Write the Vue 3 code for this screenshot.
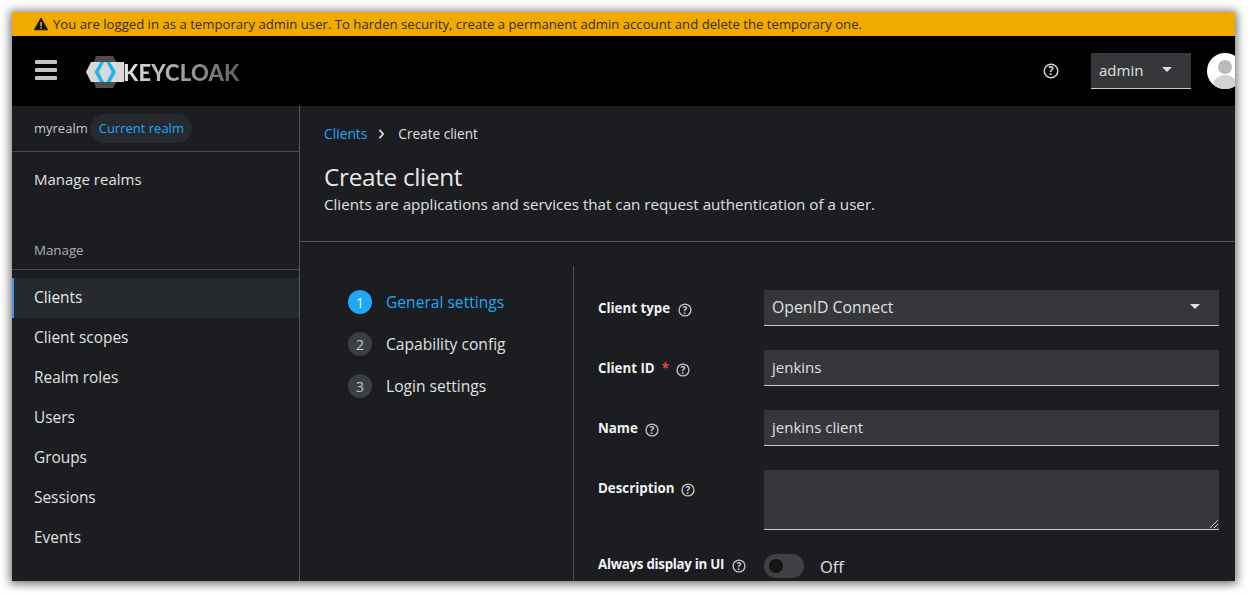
<script setup>
const navItems = ['Clients', 'Client scopes', 'Realm roles', 'Users', 'Groups', 'Sessions', 'Events']
const steps = [
  { n: 1, label: 'General settings', current: true },
  { n: 2, label: 'Capability config', current: false },
  { n: 3, label: 'Login settings', current: false }
]
</script>

<template>
  <div class="page">
    <div class="window">
      <div class="banner">
        <svg class="warn" viewBox="0 0 16 16" width="14" height="14"><path d="M8 1.2 15.6 14.6H.4Z" fill="#151515" stroke="#151515" stroke-linejoin="round"/><rect x="7.1" y="5.6" width="1.8" height="5" fill="#f0ab00"/><rect x="7.1" y="11.4" width="1.8" height="1.8" fill="#f0ab00"/></svg>
        <span>You are logged in as a temporary admin user. To harden security, create a permanent admin account and delete the temporary one.</span>
      </div>
      <header class="topbar">
        <button class="burger" aria-label="Menu"><i></i><i></i><i></i></button>
        <div class="logo">
          <svg width="38" height="32" viewBox="0 0 38 32">
            <path d="M10 0H27L31 7V25L27 32H10L4 16Z" fill="#4d4d4d"/>
            <path d="M0 16 5 6H38V26H5Z" fill="#d9d9d9"/>
            <path d="M14.5 6 8.5 16 14 26H18L12.8 16 18 6ZM24 6 30 16 24.5 26H20.5L25.7 16 20.5 6Z" fill="#1cb5ea"/>
          </svg>
          <span class="wordmark">KEYCLOAK</span>
        </div>
        <div class="top-right">
          <svg class="top-help" viewBox="0 0 16 16" width="16" height="16"><circle cx="8" cy="8" r="6.8" fill="none" stroke="#d2d2d2" stroke-width="1.5"/><text x="8" y="12" text-anchor="middle" class="q">?</text></svg>
          <div class="user"><span>admin</span><i class="caret"></i></div>
          <svg class="avatar" viewBox="0 0 36 36" width="36" height="36"><defs><clipPath id="av"><circle cx="18" cy="18" r="18"/></clipPath></defs><circle cx="18" cy="18" r="18" fill="#fff"/><g clip-path="url(#av)"><circle cx="18" cy="14" r="7" fill="#b8bbbe"/><ellipse cx="18" cy="32" rx="12" ry="10" fill="#d2d2d2"/></g></svg>
        </div>
      </header>
      <div class="body">
        <aside class="sidebar">
          <div class="realm"><span class="realm-name">myrealm</span><span class="chip">Current realm</span></div>
          <div class="link manage-realms">Manage realms</div>
          <div class="group-title">Manage</div>
          <nav class="nav">
            <div v-for="(item, i) in navItems" :key="item" class="link" :class="{ active: i === 0 }">{{ item }}</div>
          </nav>
        </aside>
        <main class="main">
          <section class="head">
            <div class="crumbs"><a>Clients</a><svg viewBox="0 0 8 12" width="7" height="10"><path d="M1.5 1 6 6 1.5 11" fill="none" stroke="#e0e0e0" stroke-width="2"/></svg><span>Create client</span></div>
            <h1>Create client</h1>
            <p>Clients are applications and services that can request authentication of a user.</p>
          </section>
          <section class="wizard">
            <ol class="steps">
              <li v-for="s in steps" :key="s.n" :class="{ current: s.current }"><b>{{ s.n }}</b><span>{{ s.label }}</span></li>
            </ol>
            <form class="form">
              <div class="row">
                <label>Client type<svg class="help" viewBox="0 0 16 16" width="14" height="14"><circle cx="8" cy="8" r="6.8" fill="none" stroke="#c7c7c7" stroke-width="1.5"/><text x="8" y="12" text-anchor="middle" class="q">?</text></svg></label>
                <div class="field select"><span class="wide">OpenID Connect</span><i class="caret"></i></div>
              </div>
              <div class="row">
                <label>Client ID<em>*</em><svg class="help" viewBox="0 0 16 16" width="14" height="14"><circle cx="8" cy="8" r="6.8" fill="none" stroke="#c7c7c7" stroke-width="1.5"/><text x="8" y="12" text-anchor="middle" class="q">?</text></svg></label>
                <div class="field">jenkins</div>
              </div>
              <div class="row">
                <label>Name<svg class="help tight" viewBox="0 0 16 16" width="14" height="14"><circle cx="8" cy="8" r="6.8" fill="none" stroke="#c7c7c7" stroke-width="1.5"/><text x="8" y="12" text-anchor="middle" class="q">?</text></svg></label>
                <div class="field">jenkins client</div>
              </div>
              <div class="row">
                <label>Description<svg class="help tight" viewBox="0 0 16 16" width="14" height="14"><circle cx="8" cy="8" r="6.8" fill="none" stroke="#c7c7c7" stroke-width="1.5"/><text x="8" y="12" text-anchor="middle" class="q">?</text></svg></label>
                <div class="field area"><svg class="grip" viewBox="0 0 8 8" width="8" height="8"><path d="M0 8 8 0M4 8 8 4" stroke="#c7c7c7" stroke-width="1"/></svg></div>
              </div>
              <div class="row toggle-row">
                <label><span class="condensed">Always display in UI</span><svg class="help" viewBox="0 0 16 16" width="14" height="14"><circle cx="8" cy="8" r="6.8" fill="none" stroke="#c7c7c7" stroke-width="1.5"/><text x="8" y="12" text-anchor="middle" class="q">?</text></svg></label>
                <div class="toggle"><span class="track"><i></i></span><span class="off">Off</span></div>
              </div>
            </form>
          </section>
        </main>
      </div>
    </div>
  </div>
</template>

<style>
html, body { margin: 0; background: #fff; overflow: hidden; }
</style>

<style scoped>
.page { padding: 12px 13px 13px 12px; height: 569px; font-family: "Open Sans", "Noto Sans", sans-serif; font-size: 15px; color: #e0e0e0; }
.window { height: 569px; display: flex; flex-direction: column; overflow: hidden; background: #1b1d21; box-shadow: 0 1px 9px 2px rgba(0,0,0,.55); }
.banner { height: 24px; flex: none; background: #f0ab00; color: #3a2c00; display: flex; align-items: center; gap: 5px; padding-left: 22px; font-size: 13.17px; }
.warn { flex: none; }
.topbar { height: 70px; flex: none; background: #000; display: flex; align-items: center; padding-left: 23px; }
.burger { width: 22px; height: 20px; padding: 0; border: 0; background: none; display: flex; flex-direction: column; justify-content: space-between; margin-top: -2px; }
.burger i { display: block; height: 4px; background: #c4c4c4; border-radius: 1px; }
.logo { display: flex; align-items: center; margin-left: 29px; margin-top: 2px; }
.logo svg { margin-right: -1px; }
.wordmark { font-family: Lato, sans-serif; font-weight: 900; font-size: 22px; letter-spacing: .2px; background: linear-gradient(90deg, #e6e6e6, #5c5c5c); -webkit-background-clip: text; background-clip: text; color: transparent; }
.top-right { margin-left: auto; display: flex; align-items: center; }
.top-help { margin-right: 32px; flex: none; }
.user { width: 100px; height: 36px; box-sizing: border-box; background: #36373a; border-bottom: 1px solid #c7c7c7; display: flex; align-items: center; justify-content: space-between; padding: 0 19px 2px 8px; font-size: 15px; color: #e0e0e0; }
.caret { width: 0; height: 0; border-left: 5px solid transparent; border-right: 5px solid transparent; border-top: 5px solid #e0e0e0; display: block; }
.avatar { margin-left: 16px; margin-right: -8px; flex: none; }
.body { flex: 1; min-height: 0; display: flex; }
.sidebar { width: 287px; flex: none; border-right: 1px solid #57585a; background: #1b1d21; }
.realm { height: 46px; box-sizing: border-box; border-bottom: 1px solid #4a4b4e; display: flex; align-items: center; padding-left: 22px; gap: 2px; font-size: 13px; }
.realm-name { color: #c7c7c7; padding-bottom: 1px; }
.chip { height: 29px; padding: 0 8px 1px 9px; box-sizing: content-box; height: 28px; border-radius: 15px; background: #26292d; color: #1fa7f8; display: flex; align-items: center; }
.link { height: 40px; display: flex; align-items: center; padding: 0 0 2px 22px; box-sizing: border-box; font-size: 15.4px; }
.manage-realms { margin-top: 7px; font-size: 15px; padding-bottom: 0; }
.group-title { margin-top: 41px; height: 30px; box-sizing: border-box; padding: 0 0 0 22px; border-bottom: 1px solid #4a4b4e; font-size: 13.3px; color: #aeb0b2; line-height: 20px; }
.nav { margin-top: 8px; }
.active { background: #26292d; border-left: 2px solid #4394e5; padding-left: 20px; color: #e8e8e8; }
.main { flex: 1; min-width: 0; }
.head { height: 136px; box-sizing: border-box; padding: 18px 0 0 24px; border-bottom: 1px solid #57585a; }
.crumbs { display: flex; align-items: center; font-size: 13.6px; line-height: 20px; }
.crumbs a { color: #1fa7f8; font-size: 13.8px; }
.crumbs svg { margin: 0 13px 0 11px; }
.head h1 { margin: 17px 0 0; font-size: 24.3px; line-height: 32px; font-weight: 500; color: #e8e8e8; letter-spacing: -.3px; }
.head p { margin: 0; font-size: 15.16px; line-height: 22px; color: #e0e0e0; }
.wizard { display: flex; margin-top: 24px; height: 400px; }
.steps { list-style: none; width: 274px; height: 100%; margin: 0; padding: 15px 0 0 48px; box-sizing: border-box; border-right: 1px solid #4a4b4e; font-size: 15.6px; flex: none; }
.steps li { display: flex; align-items: center; height: 42px; gap: 14px; }
.steps b { width: 24px; height: 24px; border-radius: 50%; background: #3c3f42; color: #c7c7c7; font-weight: 400; font-size: 14px; display: flex; align-items: center; justify-content: center; }
.steps .current b { background: #1fa7f8; color: #e8f4ff; }
.steps .current span { color: #1fa7f8; }
.form { flex: 1; padding: 24px 16px 0 24px; min-width: 0; }
.row { display: grid; grid-template-columns: 166px 1fr; margin-bottom: 24px; }
.row label { font-weight: 700; font-size: 13.3px; line-height: 20px; color: #f2f2f2; padding-top: 8px; display: flex; align-items: flex-start; }
.help { flex: none; margin: 5px 0 0 8px; }
.help.tight { margin-left: 7px; }
.q { font: 700 11.5px "Open Sans", sans-serif; fill: #c7c7c7; }
.top-help .q { fill: #d2d2d2; }
em { color: #e34a4a; font-style: normal; margin-left: 7px; }
em + .help { margin-left: 7px; }
.field { height: 36px; box-sizing: border-box; background: #36373a; border-bottom: 1px solid #c7c7c7; padding: 0 8px 2px; display: flex; align-items: center; justify-content: space-between; position: relative; }
.wide { font-size: 15.8px; }
.select { padding-right: 19px; }
.area { height: 60px; }
.grip { position: absolute; right: 1px; bottom: 1px; }
.toggle-row { margin-top: 1px; }
.toggle-row label { padding-top: 0; }
.condensed { letter-spacing: -.27px; }
.toggle { display: flex; align-items: center; gap: 16px; height: 24px; }
.off { font-size: 16.5px; }
.track { width: 40px; height: 24px; border-radius: 12px; background: #3f4144; display: flex; align-items: center; padding-left: 5px; box-sizing: border-box; }
.track i { width: 14px; height: 14px; border-radius: 50%; background: #151515; display: block; }
</style>
